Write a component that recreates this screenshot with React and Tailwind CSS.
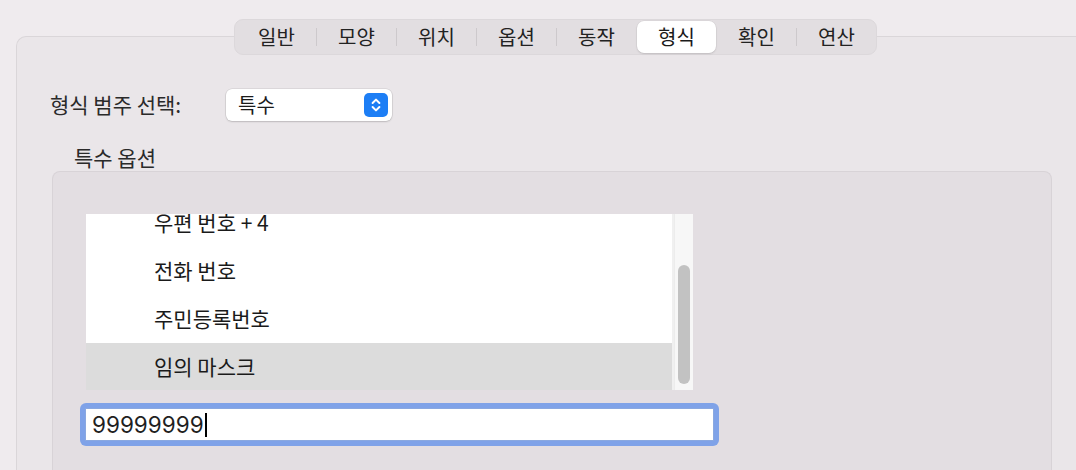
import React from "react";

const KR = { fontFamily: '"Noto Sans CJK KR", "Noto Sans", sans-serif' };

const tabs = ["일반", "모양", "위치", "옵션", "동작", "형식", "확인", "연산"];
const SEL = 5;

function TabBar() {
  const items = [];
  tabs.forEach((t, i) => {
    if (i > 0) {
      const hidden = i === SEL || i - 1 === SEL;
      items.push(
        <div key={"s" + i} className="w-px h-[18px] flex-none flex items-center">
          <div className={hidden ? "w-px h-[18px]" : "w-px h-[18px] bg-[#cdc9cc]"} />
        </div>
      );
    }
    const sel = i === SEL;
    items.push(
      <div
        key={t}
        className={
          sel
            ? "w-[79px] h-[32px] flex-none flex items-center justify-center rounded-[7px] bg-white shadow-[0_0_0_0.5px_rgba(0,0,0,0.06),0_1px_2px_rgba(0,0,0,0.12)] text-[20px] text-[#1a1a1a]"
            : "w-[79px] h-[32px] flex-none flex items-center justify-center text-[20px] text-[#222222]"
        }
      >
        {t}
      </div>
    );
  });
  return (
    <div className="ml-[217px] -mt-[18px] w-[643px] h-[36px] flex items-center px-[2px] rounded-[9px] bg-[#e2dee1] border border-[#dcd8db]">
      {items}
    </div>
  );
}

function Stepper() {
  return (
    <div className="w-[24px] h-[24px] rounded-[5px] bg-[#1d7ef5] flex items-center justify-center">
      <svg width="24" height="24" viewBox="0 0 24 24" fill="none">
        <path d="M8.6 10 L12 6.6 L15.4 10" stroke="white" strokeWidth="2" strokeLinecap="round" strokeLinejoin="round" />
        <path d="M8.6 14 L12 17.4 L15.4 14" stroke="white" strokeWidth="2" strokeLinecap="round" strokeLinejoin="round" />
      </svg>
    </div>
  );
}

const rows = ["우편 번호 + 4", "전화 번호", "주민등록번호", "임의 마스크"];

export default function App() {
  return (
    <div style={KR} className="w-[1076px] h-[470px] overflow-hidden bg-[#efebee] pt-[36px] pl-[16px] flex flex-col">
      <div className="flex-1 flex flex-col bg-[#eae6e9] border-t border-l border-[#dad6d9] rounded-tl-[10px]">
        <TabBar />

        <div className="mt-[34px] flex items-center pl-[33px] h-[32px]">
          <div className="w-[176px] text-[21px] text-[#2a2a2a]">형식 범주 선택:</div>
          <div className="w-[166px] h-[32px] rounded-[6px] bg-white shadow-[0_0_0_0.5px_rgba(0,0,0,0.12),0_1px_2px_rgba(0,0,0,0.14)] flex items-center justify-between pl-[12px] pr-[4px]">
            <span className="text-[20px] text-[#1a1a1a]">특수</span>
            <Stepper />
          </div>
        </div>

        <div className="mt-[24px] ml-[57px] h-[24px] leading-[24px] text-[21px] text-[#2a2a2a]">특수 옵션</div>

        <div className="mt-[2px] ml-[35px] w-[1000px] flex-1 rounded-t-[8px] border-t border-l border-r border-[#d8d3d7] bg-[#e3dee2] pt-[42px] pl-[33px]">
          <div className="w-[607px] h-[176px] flex bg-white overflow-hidden">
            <div className="w-[586px] h-[176px] overflow-hidden">
              <div className="-mt-[15px]">
                {rows.map((r, i) => (
                  <div
                    key={r}
                    className={
                      i === 3
                        ? "h-[48px] flex items-center pl-[68px] bg-[#dcdcdc] text-[21px] text-[#1a1a1a]"
                        : "h-[48px] flex items-center pl-[68px] text-[21px] text-[#1a1a1a]"
                    }
                  >
                    {r}
                  </div>
                ))}
              </div>
            </div>
            <div className="w-[2px] h-[176px] bg-[#f0f0f0]" />
            <div className="w-[19px] h-[176px] bg-[#f7f7f7] border-l border-[#ececec] pt-[51px] pl-[3px]">
              <div className="w-[12px] h-[119px] rounded-full bg-[#c2c2c2]" />
            </div>
          </div>

          <div className="mt-[13px] -ml-[6px] w-[639px] h-[43px] rounded-[6px] bg-[#7fa2e8] p-[5px]">
            <div className="w-full h-full bg-white border border-[#8aa8e0] flex items-center pl-[6px]">
              <span className="text-[22.5px] text-[#1f1f1f] font-['Inter']">99999999</span>
              <span className="w-[2px] h-[24px] bg-black ml-[1px]" />
            </div>
          </div>
        </div>
      </div>
    </div>
  );
}
